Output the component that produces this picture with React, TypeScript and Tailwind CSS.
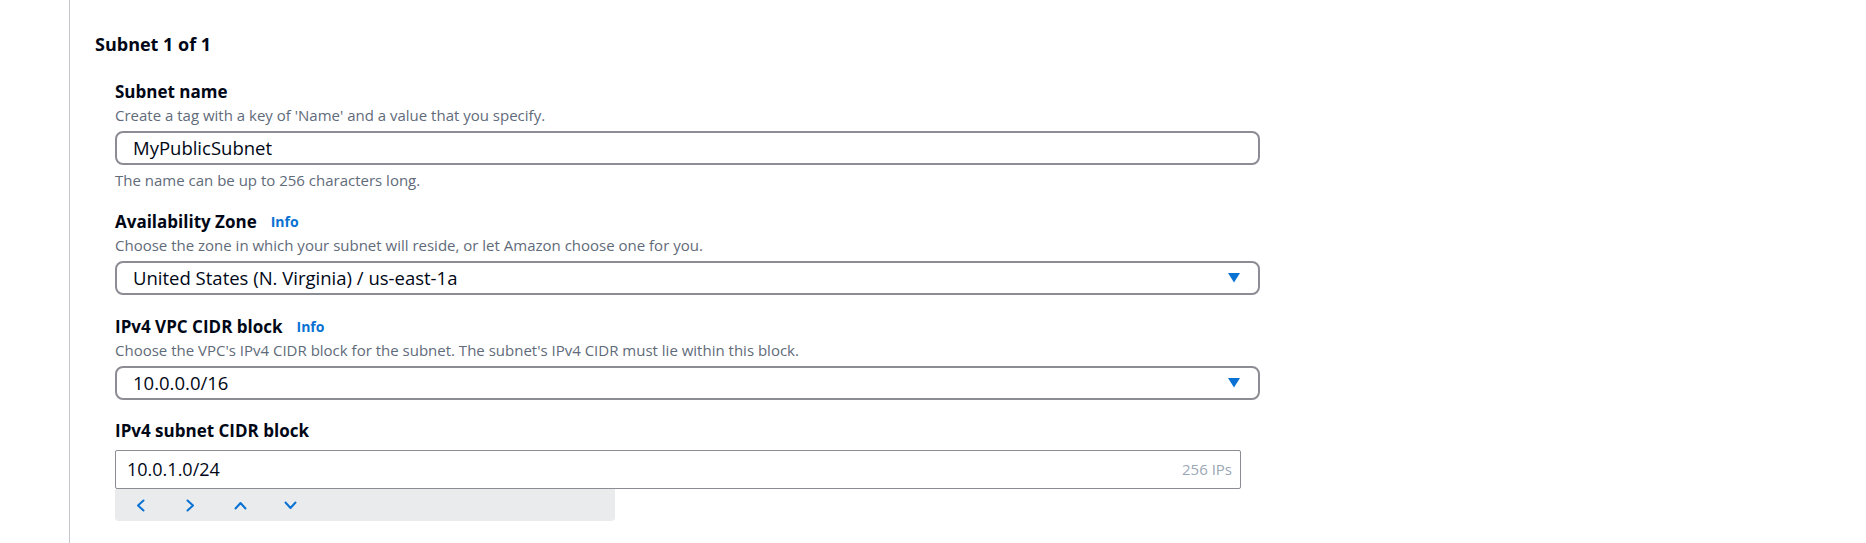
import type { ReactNode } from "react";

const font = { fontFamily: "'Open Sans', 'Noto Sans', sans-serif" };

function Label({ children, info, className = "" }: { children: ReactNode; info?: boolean; className?: string }) {
  return (
    <div className={`flex items-center h-[20px] ${className}`}>
      <span className="text-[17px] font-bold text-[#000716] leading-[20px]">{children}</span>
      {info && <span className="ml-[14px] text-[14px] font-bold text-[#0972d3] leading-[20px]">Info</span>}
    </div>
  );
}

function Desc({ children, className = "" }: { children: ReactNode; className?: string }) {
  return <div className={`text-[15px] leading-[20px] text-[#5f6b7a] ${className}`}>{children}</div>;
}

function Select({ value, className = "" }: { value: string; className?: string }) {
  return (
    <div
      className={`flex items-center justify-between w-[1145px] h-[34px] rounded-[8px] border-2 border-[#8c8c94] pl-[16px] pr-[18px] ${className}`}
    >
      <span className="text-[18.5px] text-[#000716]">{value}</span>
      <svg width="12" height="10" viewBox="0 0 12 10">
        <path d="M0 0 H12 L6 9.5 Z" fill="#0972d3" />
      </svg>
    </div>
  );
}

function Chevron({ d, w, h }: { d: string; w: number; h: number }) {
  return (
    <button className="w-[50px] h-[32px] flex items-center justify-center">
      <svg width={w} height={h} viewBox={`0 0 ${w} ${h}`} fill="none">
        <path d={d} stroke="#0972d3" strokeWidth="2" strokeLinecap="round" strokeLinejoin="round" />
      </svg>
    </button>
  );
}

export default function App() {
  return (
    <div className="bg-white h-[543px] w-[1866px] overflow-hidden" style={font}>
      <div className="ml-[69px] h-full border-l border-[#c6c6cd] pl-[25px] pt-[33px]">
        <h2 className="text-[18px] leading-[22px] font-bold text-[#000716]">Subnet 1 of 1</h2>

        <div className="pl-[20px]">
          {/* Subnet name */}
          <Label className="mt-[27px]">Subnet name</Label>
          <Desc className="mt-[3px]">Create a tag with a key of 'Name' and a value that you specify.</Desc>
          <div className="mt-[6px] flex items-center w-[1145px] h-[34px] rounded-[8px] border-2 border-[#8c8c94] pl-[16px]">
            <span className="text-[18.5px] text-[#000716]">MyPublicSubnet</span>
          </div>
          <Desc className="mt-[5px]">The name can be up to 256 characters long.</Desc>

          {/* Availability Zone */}
          <Label info className="mt-[22px]">Availability Zone</Label>
          <Desc className="mt-[3px]">Choose the zone in which your subnet will reside, or let Amazon choose one for you.</Desc>
          <Select className="mt-[6px]" value="United States (N. Virginia) / us-east-1a" />

          {/* VPC CIDR */}
          <Label info className="mt-[22px]">IPv4 VPC CIDR block</Label>
          <Desc className="mt-[3px]">
            Choose the VPC's IPv4 CIDR block for the subnet. The subnet's IPv4 CIDR must lie within this block.
          </Desc>
          <Select className="mt-[6px]" value="10.0.0.0/16" />

          {/* Subnet CIDR */}
          <Label className="mt-[21px]">IPv4 subnet CIDR block</Label>
          <div className="mt-[9px] flex items-center justify-between w-[1126px] h-[39px] rounded-[2px] border border-[#8c8c94] pl-[11px] pr-[8px]">
            <span className="text-[18px] text-[#000716]">10.0.1.0/24</span>
            <span className="text-[15px] text-[#9ba7b6]">256 IPs</span>
          </div>
          <div className="flex w-[500px] h-[32px] bg-[#e9ebed] rounded-b-[4px]">
            <Chevron w={9} h={13} d="M7.5 1.5 L2 6.5 L7.5 11.5" />
            <Chevron w={9} h={13} d="M1.5 1.5 L7 6.5 L1.5 11.5" />
            <Chevron w={13} h={9} d="M1.5 7.5 L6.5 2 L11.5 7.5" />
            <Chevron w={13} h={9} d="M1.5 1.5 L6.5 7 L11.5 1.5" />
          </div>
        </div>
      </div>
    </div>
  );
}
